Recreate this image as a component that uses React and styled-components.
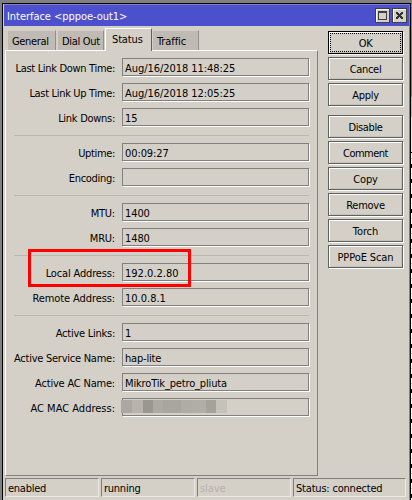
import React from "react";
import styled, { createGlobalStyle } from "styled-components";

const Global = createGlobalStyle`
  * { box-sizing: border-box; }
  body { margin: 0; background: #808080; overflow: hidden; }
`;

const Desktop = styled.div`
  position: relative;
  width: 412px;
  height: 500px;
  padding: 3px 0 0 2px;
  background: #808080;
  overflow: hidden;
  color: #000;
  font: 11px/16px "DejaVu Sans Condensed", "DejaVu Sans", sans-serif;
  font-stretch: condensed;
  white-space: nowrap;
  display: flex;
`;

const Backdrop = styled.div`
  width: 1px;
  height: 497px;
  background:
    linear-gradient(#858585 0 94px, #b9b9b9 94px 114px, #ececec 114px 149px, transparent 149px),
    repeating-linear-gradient(#fff 0 5px, #c8c8c8 5px 6px, #fff 6px 11px, #000 11px 15px);
`;

const Window = styled.div`
  width: 409px;
  height: 510px;
  border: 1px solid #000;
  background: #d4d0c8;
  box-shadow: inset -1px 0 #808080;
  display: flex;
  flex-direction: column;
`;

const TitleBar = styled.div`
  height: 22px;
  margin: 0 1px;
  padding: 4px 2px 0 3px;
  border-top: 1px solid #8080c8;
  background: #4c50cc;
  color: #fff;
  display: flex;
`;

const Text = styled.span`
  letter-spacing: ${(p) => p.$ls || 0}px;
`;

const TitleText = styled(Text)`
  flex: 1;
`;

const TitleButton = styled.span`
  width: 15px;
  height: 15px;
  margin: -1px 0 0 2px;
  border: 1px solid #404040;
  background: #d4d0c8;
  box-shadow: inset 1px 1px #fff;
  svg { display: block; }
`;

const Body = styled.div`
  display: flex;
  height: 451px;
`;

const Notebook = styled.div`
  width: 315px;
  padding: 2px 0 0 2px;
`;

const Tabs = styled.div`
  display: flex;
  align-items: flex-end;
  height: 22px;
  padding-left: 2px;
`;

const Tab = styled.div`
  position: relative;
  z-index: 1;
  width: ${(p) => p.$width}px;
  height: ${(p) => (p.$active ? 23 : 20)}px;
  margin: 0 ${(p) => (p.$active ? 0 : 1)}px ${(p) => (p.$active ? -1 : 0)}px 0;
  padding: 3px 0 0 ${(p) => (p.$active ? 6 : 4)}px;
  border: 1px solid;
  border-color: ${(p) => (p.$active ? "#fff #606060 transparent #fff" : "#d4d0c8 #949088 transparent #d4d0c8")};
  border-bottom: 0;
  background: ${(p) => (p.$active ? "#d4d0c8" : "#bfbab3")};
`;

const Panel = styled.div`
  width: 313px;
  height: 426px;
  padding: 7px 8px 0 8px;
  border: 1px solid;
  border-color: #fff #808080 #808080 #fff;
`;

const Group = styled.div`
  display: flex;
  flex-direction: column;
  gap: 7px;
  & + & {
    margin-top: 9px;
    padding-top: 7px;
    border-top: 1px solid #bab7b2;
  }
`;

const Row = styled.div`
  display: flex;
  height: 18px;
`;

const Label = styled.span`
  width: 108px;
  padding: 3px 7px 0 0;
  display: flex;
  justify-content: flex-end;
`;

const Field = styled.span`
  position: relative;
  width: 187px;
  height: 18px;
  padding: 2px 0 0 2px;
  border: 1px solid #808080;
  box-shadow: 1px 1px #fff;
`;

const Mosaic = styled.span`
  position: absolute;
  left: -2px;
  top: 1px;
  width: 106px;
  height: 13px;
  display: flex;
`;

const Block = styled.i`
  width: ${(p) => p.$w}px;
  background: ${(p) => p.$c};
`;

const Buttons = styled.div`
  display: flex;
  flex-direction: column;
  gap: 3px;
  padding: 5px 0 0 10px;
`;

const Button = styled.div`
  width: 75px;
  height: 23px;
  margin-top: ${(p) => (p.$gap ? 6 : 0)}px;
  padding-top: 4px;
  border: 1px solid ${(p) => (p.$primary ? "#000" : "#606060")};
  box-shadow: inset 1px 1px #fff, inset -1px -1px #c4c3b6, 1px 1px #fff;
  text-align: center;
  ${(p) => p.$primary && `
    outline: 1px dotted #000;
    outline-offset: -3px;
  `}
`;

const StatusBar = styled.div`
  display: flex;
  gap: 2px;
  padding: 1px 0 0 2px;
`;

const StatusCell = styled.div`
  width: ${(p) => p.$w}px;
  height: 19px;
  padding: 2px 0 0 2px;
  border: 1px solid;
  border-color: #808080 #ece9e4 #ece9e4 #808080;
  color: ${(p) => (p.$off ? "#b4b1ac" : "#000")};
`;

const Highlight = styled.div`
  position: absolute;
  left: 28px;
  top: 249px;
  width: 163px;
  height: 38px;
  border: 3px solid #f00;
`;

// Each row: label, label tracking, value, value tracking.
const groups = [
  [
    ["Last Link Down Time:", -0.32, "Aug/16/2018 11:48:25", -0.05],
    ["Last Link Up Time:", -0.32, "Aug/16/2018 12:05:25", -0.05],
    ["Link Downs:", -0.28, "15", 0],
  ],
  [["Uptime:", -0.35, "00:09:27", -0.1], ["Encoding:", -0.3, "", 0]],
  [["MTU:", -0.2, "1400", -0.1], ["MRU:", -0.2, "1480", -0.1]],
  [["Local Address:", -0.15, "192.0.2.80", 0], ["Remote Address:", -0.1, "10.0.8.1", 0]],
  [
    ["Active Links:", -0.25, "1", 0],
    ["Active Service Name:", -0.25, "hap-lite", -0.2],
    ["Active AC Name:", -0.2, "MikroTik_petro_pliuta", -0.15],
    ["AC MAC Address:", 0, null, 0],
  ],
];

const blocks = [
  [11, "#aaa8a1"], [11, "#b8b4ac"], [10, "#99978f"], [10, "#adaaa3"], [18, "#a8a69e"],
  [11, "#aeaca5"], [14, "#b1aea7"], [10, "#a5a29a"], [11, "#c5c2ba"],
];

const buttons = [
  ["OK", -0.3], ["Cancel", -0.3], ["Apply", -0.3], ["Disable", -0.4], ["Comment", -0.5],
  ["Copy", -0.2], ["Remove", -0.25], ["Torch", -0.1], ["PPPoE Scan", -0.1],
];

const tabs = [
  ["General", 49, -0.35], ["Dial Out", 47, -0.3], ["Status", 47, -0.15], ["Traffic", 47, -0.1],
];

const cells = [
  ["enabled", 94, -0.25], ["running", 94, -0.25], ["slave", 94, -0.1], ["Status: connected", 113, -0.2],
];

export default function App() {
  return (
    <Desktop>
      <Global />
      <Window>
        <TitleBar>
          <TitleText $ls={-0.05}>Interface &lt;pppoe-out1&gt;</TitleText>
          <TitleButton>
            <svg width="13" height="13" shapeRendering="crispEdges">
              <path d="M2 2h9v9H2z M3 4v6h7V4z" fill="#404040" fillRule="evenodd" />
            </svg>
          </TitleButton>
          <TitleButton>
            <svg width="13" height="13" shapeRendering="crispEdges">
              <path d="M3 3h2v1h1v1h1V4h1V3h2v2H9v1H8v1h1v1h1v2H8V9H7V8H6v1H5v1H3V8h1V7h1V6H4V5H3z" fill="#303030" />
            </svg>
          </TitleButton>
        </TitleBar>
        <Body>
          <Notebook>
            <Tabs>
              {tabs.map(([name, width, ls]) => (
                <Tab key={name} $width={width} $active={name === "Status"}>
                  <Text $ls={ls}>{name}</Text>
                </Tab>
              ))}
            </Tabs>
            <Panel>
              {groups.map((rows, i) => (
                <Group key={i}>
                  {rows.map(([label, labelLs, value, valueLs]) => (
                    <Row key={label}>
                      <Label><Text $ls={labelLs}>{label}</Text></Label>
                      <Field>
                        {value === null ? (
                          <Mosaic>{blocks.map(([w, c], k) => <Block key={k} $w={w} $c={c} />)}</Mosaic>
                        ) : <Text $ls={valueLs}>{value}</Text>}
                      </Field>
                    </Row>
                  ))}
                </Group>
              ))}
            </Panel>
          </Notebook>
          <Buttons>
            {buttons.map(([name, ls]) => (
              <Button key={name} $primary={name === "OK"} $gap={name === "Disable"}>
                <Text $ls={ls}>{name}</Text>
              </Button>
            ))}
          </Buttons>
        </Body>
        <StatusBar>
          {cells.map(([name, w, ls]) => (
            <StatusCell key={name} $w={w} $off={name === "slave"}>
              <Text $ls={ls}>{name}</Text>
            </StatusCell>
          ))}
        </StatusBar>
      </Window>
      <Backdrop />
      <Highlight />
    </Desktop>
  );
}
